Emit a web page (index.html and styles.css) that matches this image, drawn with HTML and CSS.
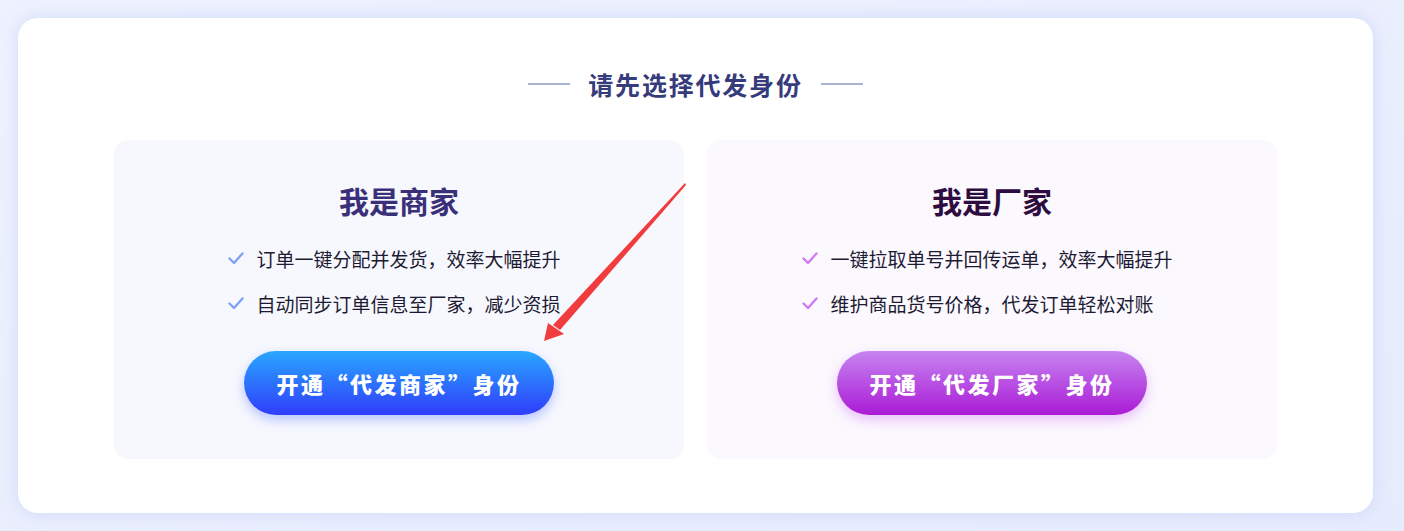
FILE: index.html
```html
<!DOCTYPE html>
<html lang="zh-CN">
<head>
	<meta charset="UTF-8">
	<title>选择代发身份</title>
	<link rel="stylesheet" href="styles.css">
</head>
<body>
<div class="panel">
	<div class="title">
		<span class="line"></span>
		<h2>请先选择代发身份</h2>
		<span class="line"></span>
	</div>
	<div class="cards">
		<div class="card shop">
			<h3>我是商家</h3>
			<ul class="list">
				<li><svg class="tick" viewBox="0 0 16 13"><path d="M1.5 6.5 L6 11 L14.5 1.5" /></svg>订单一键分配并发货，效率大幅提升</li>
				<li><svg class="tick" viewBox="0 0 16 13"><path d="M1.5 6.5 L6 11 L14.5 1.5" /></svg>自动同步订单信息至厂家，减少资损</li>
			</ul>
			<a class="btn">开通“代发商家”身份</a>
		</div>
		<div class="card factory">
			<h3>我是厂家</h3>
			<ul class="list">
				<li><svg class="tick" viewBox="0 0 16 13"><path d="M1.5 6.5 L6 11 L14.5 1.5" /></svg>一键拉取单号并回传运单，效率大幅提升</li>
				<li><svg class="tick" viewBox="0 0 16 13"><path d="M1.5 6.5 L6 11 L14.5 1.5" /></svg>维护商品货号价格，代发订单轻松对账</li>
			</ul>
			<a class="btn">开通“代发厂家”身份</a>
		</div>
	</div>
</div>
<!-- 标注箭头 -->
<svg class="arrow" width="1404" height="531" viewBox="0 0 1404 531">
	<polygon points="685,183 686,185 560,330 553,325" fill="#f03c3c"/>
	<polygon points="544,341 548,323 564,334" fill="#f03c3c"/>
</svg>
</body>
</html>
```

FILE: styles.css
```css
html,body{
	margin: 0;
	padding: 0;
}
body{
	width: 1404px;
	height: 531px;
	background: linear-gradient(160deg, #eef2fe 0%, #e6ebfd 100%);
	font-family: "Noto Sans CJK SC", "Noto Sans", sans-serif;
	position: relative;
	overflow: hidden;
}
.panel{
	width: 1355px;
	height: 495px;
	margin: 18px 0 0 18px;
	background: #fff;
	border-radius: 20px;
	box-shadow: 0 0 16px rgba(190, 202, 250, 0.6);
	box-sizing: border-box;
	padding-top: 50px;
	display: flex;
	flex-direction: column;
	align-items: center;
}
.title{
	display: flex;
	align-items: center;
	gap: 18px;
	height: 32px;
}
.title h2{
	margin: 0;
	font-size: 25px;
	font-weight: 600;
	letter-spacing: 1.8px;
	color: #363b7b;
	line-height: 32px;
}
.title .line{
	width: 42px;
	height: 2px;
	background: #a9b4d0;
}
.cards{
	display: flex;
	gap: 23px;
	margin-top: 40px;
}
.card{
	width: 570px;
	height: 319px;
	box-sizing: border-box;
	border-radius: 14px;
	padding-top: 40px;
	display: flex;
	flex-direction: column;
	align-items: center;
}
.shop{
	background: #f7f8fe;
}
.factory{
	background: #fbf8fe;
}
.card h3{
	margin: 0;
	font-size: 30px;
	font-weight: 700;
	line-height: 40px;
}
.shop h3{
	color: #3a3079;
}
.factory h3{
	color: #2e0c40;
}
.list{
	list-style: none;
	margin: 16px 9px 0 0;
	padding: 0;
}
.list li{
	display: flex;
	align-items: center;
	height: 45px;
	font-size: 19px;
	color: #1d1b33;
}
.tick{
	width: 16px;
	height: 13px;
	margin-right: 12px;
	fill: none;
	stroke-width: 2.4;
	stroke-linecap: round;
	stroke-linejoin: round;
}
.shop .tick{
	stroke: #7ea3f4;
}
.factory .tick{
	stroke: #d27af2;
}
.btn{
	margin-top: 25px;
	width: 310px;
	height: 64px;
	border-radius: 32px;
	display: flex;
	align-items: center;
	justify-content: center;
	color: #fff;
	font-size: 22px;
	font-weight: 900;
	letter-spacing: 2.5px;
	cursor: pointer;
}
.shop .btn{
	background: linear-gradient(180deg, #29a7ff 0%, #2f3dfb 100%);
	box-shadow: 0 5px 12px rgba(60, 100, 250, 0.35);
}
.factory .btn{
	background: linear-gradient(180deg, #c684f1 0%, #aa1bd5 100%);
	box-shadow: 0 5px 12px rgba(200, 90, 240, 0.35);
}
.arrow{
	position: absolute;
	left: 0;
	top: 0;
	pointer-events: none;
}
```
